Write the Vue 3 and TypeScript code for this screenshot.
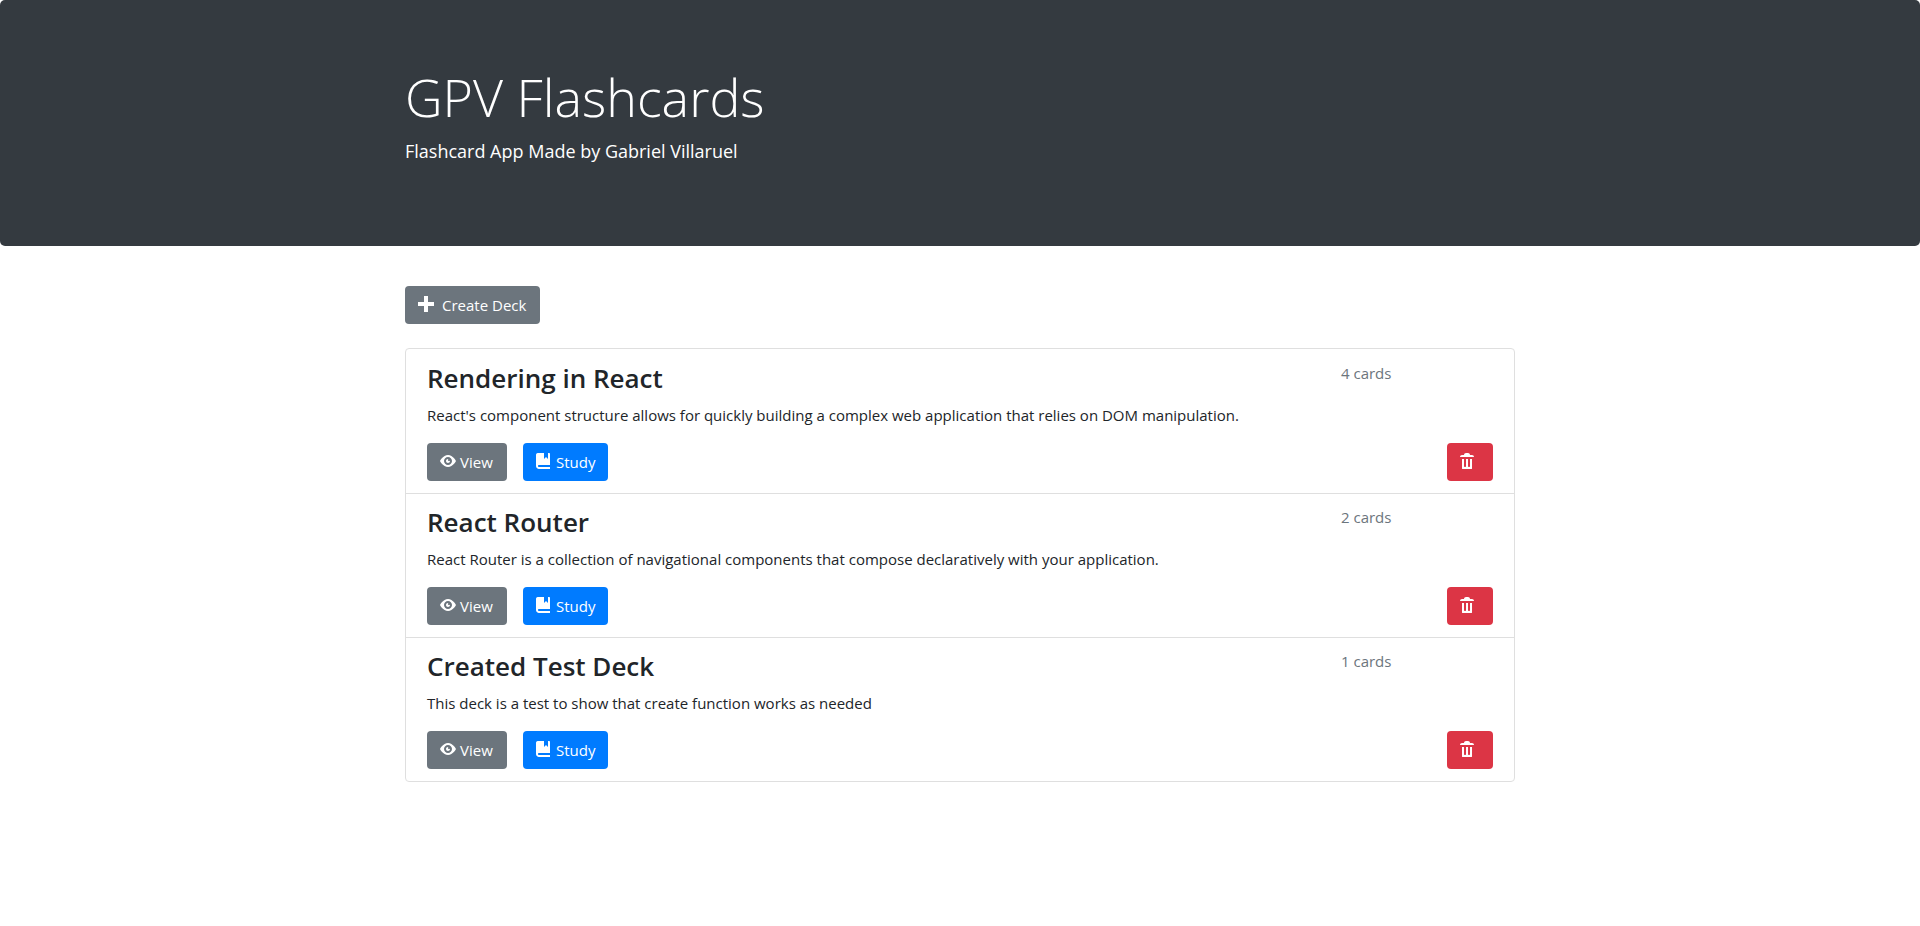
<script setup lang="ts">
interface Deck {
  id: number
  name: string
  description: string
  cards: number
}

const decks: Deck[] = [
  {
    id: 1,
    name: 'Rendering in React',
    description:
      "React's component structure allows for quickly building a complex web application that relies on DOM manipulation.",
    cards: 4,
  },
  {
    id: 2,
    name: 'React Router',
    description:
      'React Router is a collection of navigational components that compose declaratively with your application.',
    cards: 2,
  },
  {
    id: 3,
    name: 'Created Test Deck',
    description: 'This deck is a test to show that create function works as needed',
    cards: 1,
  },
]
</script>

<template>
  <header class="hero">
    <div class="container">
      <h1>GPV Flashcards</h1>
      <p class="lead">Flashcard App Made by Gabriel Villaruel</p>
    </div>
  </header>
  <main class="container">
    <a href="#new" class="btn btn-secondary btn-create">
      <svg class="icon" viewBox="0 0 8 8" aria-hidden="true">
        <path d="M3 0v3h-3v2h3v3h2v-3h3v-2h-3v-3h-2z" />
      </svg>
      Create Deck
    </a>
    <ul class="decks">
      <li v-for="deck in decks" :key="deck.id" class="deck">
        <div class="deck-head">
          <h2>{{ deck.name }}</h2>
          <span class="count">{{ deck.cards }} cards</span>
        </div>
        <p class="description">{{ deck.description }}</p>
        <div class="actions">
          <a :href="`#deck-${deck.id}`" class="btn btn-secondary btn-view">
            <svg class="icon" viewBox="0 0 8 8" aria-hidden="true">
              <path
                transform="translate(0 1)"
                d="M4.03 0c-2.53 0-4.03 3-4.03 3s1.5 3 4.03 3c2.47 0 3.97-3 3.97-3s-1.5-3-3.97-3zm-.03 1c1.11 0 2 .9 2 2 0 1.11-.89 2-2 2-1.1 0-2-.89-2-2 0-1.1.9-2 2-2zm0 1c-.55 0-1 .45-1 1s.45 1 1 1 1-.45 1-1c0-.1-.04-.19-.06-.28-.08.16-.24.28-.44.28-.28 0-.5-.22-.5-.5 0-.2.12-.36.28-.44-.09-.03-.18-.06-.28-.06z"
              />
            </svg>
            View
          </a>
          <a :href="`#study-${deck.id}`" class="btn btn-primary btn-study">
            <svg class="icon" viewBox="0 0 8 8" aria-hidden="true">
              <path
                d="M1 0c-.07 0-.13.01-.19.03-.39.08-.7.39-.78.78-.03.06-.03.12-.03.19v5.5c0 .83.67 1.5 1.5 1.5h5.5v-1h-5.5c-.28 0-.5-.22-.5-.5s.22-.5.5-.5h5.5v-5.5c0-.28-.22-.5-.5-.5h-.5v3l-1-1-1 1v-3h-3z"
              />
            </svg>
            Study
          </a>
          <button type="button" class="btn btn-danger" :aria-label="`Delete ${deck.name}`">
            <svg class="icon" viewBox="0 0 8 8" aria-hidden="true">
              <path
                d="M3 0c-.55 0-1 .45-1 1h-1c-.55 0-1 .45-1 1h7c0-.55-.45-1-1-1h-1c0-.55-.45-1-1-1h-1zm-2 3v4.81c0 .11.08.19.19.19h4.63c.11 0 .19-.08.19-.19v-4.81h-1v3.5c0 .28-.22.5-.5.5s-.5-.22-.5-.5v-3.5h-1v3.5c0 .28-.22.5-.5.5s-.5-.22-.5-.5v-3.5h-1z"
              />
            </svg>
          </button>
        </div>
      </li>
    </ul>
  </main>
</template>

<style>
body {
  margin: 0;
  background: #fff;
  color: #212529;
  font-family: 'Segoe UI', 'Open Sans', 'Noto Sans', sans-serif;
  font-size: 15px;
  line-height: 24px;
}
</style>

<style scoped>
h1,
h2,
p {
  margin: 0;
}

.container {
  box-sizing: border-box;
  width: 100%;
  max-width: 1140px;
  margin: 0 auto;
  padding: 0 15px;
}

.hero {
  padding: 64px 0 80px;
  margin-bottom: 40px;
  border-radius: 5px;
  background: #343a40;
  color: #fff;
}

h1 {
  margin-bottom: 6px;
  font-size: 52px;
  font-weight: 300;
  line-height: 66px;
}

.lead {
  font-size: 18px;
  font-weight: 400;
  line-height: 30px;
}

.btn {
  display: inline-flex;
  box-sizing: border-box;
  align-items: center;
  gap: 4px;
  height: 38px;
  padding: 0 13px;
  border: 0;
  border-radius: 4px;
  color: #fff;
  font: inherit;
  text-decoration: none;
  white-space: nowrap;
  cursor: pointer;
}

.btn-secondary {
  background: #6c757d;
}

.btn-primary {
  background: #007bff;
}

.btn-danger {
  width: 46px;
  margin-left: auto;
  background: #dc3545;
}

.btn-create {
  gap: 8px;
  min-width: 135px;
}

.btn-view {
  min-width: 80px;
}

.btn-study {
  min-width: 85px;
}

.icon {
  flex: none;
  width: 16px;
  height: 16px;
  margin-bottom: 2px;
  fill: currentColor;
}

.decks {
  margin: 24px 0 0;
  padding: 0;
  border: 1px solid #dfdfdf;
  border-radius: 4px;
  list-style: none;
}

.deck {
  padding: 12px 21px;
}

.deck + .deck {
  padding-top: 11px;
  border-top: 1px solid #dfdfdf;
}

.deck-head {
  display: flex;
  justify-content: space-between;
  margin-bottom: 8px;
}

h2 {
  font-size: 26px;
  font-weight: 600;
  line-height: 34px;
}

.count {
  width: 152px;
  color: #6c757d;
}

.description {
  margin-bottom: 16px;
}

.actions {
  display: flex;
  gap: 16px;
}
</style>
